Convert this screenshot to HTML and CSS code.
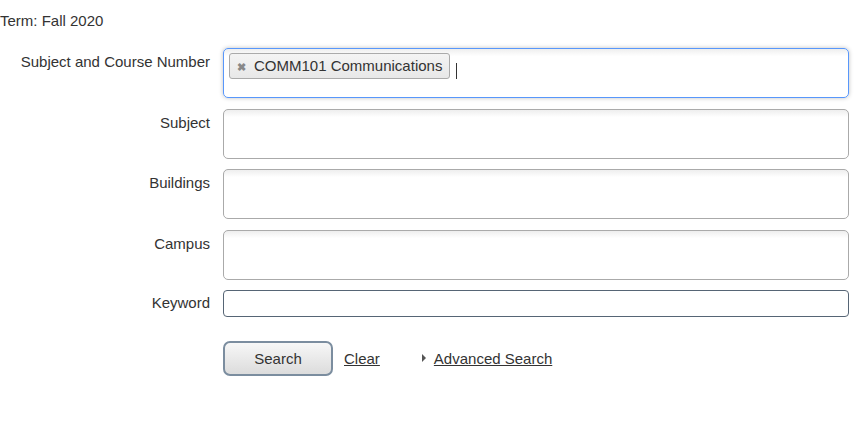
FILE: index.html
```html
<!DOCTYPE html>
<html lang="en">
<head>
  <meta charset="UTF-8" />
  <title>Class Search</title>
  <link rel="stylesheet" href="styles.css">
</head>
<body>
  <p class="term">Term: Fall 2020</p>

  <form class="search-form">
    <label class="field-label">Subject and Course Number</label>
    <div class="multi focused">
      <span class="tag"><span class="tag-x">&#10006;</span>COMM101 Communications</span>
      <span class="caret"></span>
    </div>

    <label class="field-label">Subject</label>
    <div class="multi"></div>

    <label class="field-label">Buildings</label>
    <div class="multi"></div>

    <label class="field-label">Campus</label>
    <div class="multi"></div>

    <label class="field-label short">Keyword</label>
    <input type="text" class="keyword">

    <span></span>
    <div class="actions">
      <button type="button" class="btn">Search</button>
      <a href="#" class="link">Clear</a>
      <a href="#" class="link advanced"><span class="arrow"></span>Advanced Search</a>
    </div>
  </form>
</body>
</html>
```

FILE: styles.css
```css
body {
  margin: 0;
  font-family: "Liberation Sans", Arial, sans-serif;
  font-size: 15px;
  color: #333;
  background: #fff;
}
.term {
  margin: 0;
  padding-top: 11px;
  line-height: 20px;
}
.search-form {
  display: grid;
  grid-template-columns: 210px 626px;
  column-gap: 13px;
  row-gap: 10.5px;
  margin-top: 17px;
}
.field-label {
  text-align: right;
  padding-top: 4px;
  line-height: 20px;
}
.field-label.short {
  padding-top: 3px;
}
.multi {
  height: 50px;
  box-sizing: border-box;
  border: 1px solid #aaa;
  border-radius: 5px;
  background: linear-gradient(#eee 0%, #fff 15%);
  padding: 4px 5px;
  display: flex;
  align-items: flex-start;
}
.multi.focused {
  border-color: #5897fb;
  box-shadow: 0 0 4px rgba(0, 0, 0, 0.25);
}
.tag {
  display: inline-flex;
  align-items: center;
  height: 26px;
  box-sizing: border-box;
  border: 1px solid #aaa;
  border-radius: 3px;
  background: linear-gradient(#f4f4f4, #e8e8e8);
  padding: 0 7px 0 7px;
  line-height: 20px;
}
.tag-x {
  color: #888;
  font-size: 11px;
  font-weight: bold;
  margin-right: 8px;
  margin-top: 2px;
}
.caret {
  width: 1px;
  height: 16px;
  background: #333;
  margin: 10px 0 0 6px;
}
.keyword {
  height: 27px;
  box-sizing: border-box;
  border: 1px solid #566575;
  border-radius: 4px;
  margin: 0;
}
.actions {
  display: flex;
  align-items: center;
  margin-top: 13px;
}
.btn {
  width: 110px;
  height: 35px;
  border: 2px solid #7b8d9f;
  border-radius: 7px;
  background: linear-gradient(#f7f7f7, #dcdcdc);
  font-family: inherit;
  font-size: 15px;
  color: #333;
  padding: 0;
}
.link {
  color: #333;
  text-decoration: underline;
  margin-left: 11px;
}
.advanced {
  margin-left: 42px;
  display: inline-flex;
  align-items: center;
}
.arrow {
  width: 0;
  height: 0;
  border-left: 4px solid #555;
  border-top: 4px solid transparent;
  border-bottom: 4px solid transparent;
  margin-right: 8px;
}
```
